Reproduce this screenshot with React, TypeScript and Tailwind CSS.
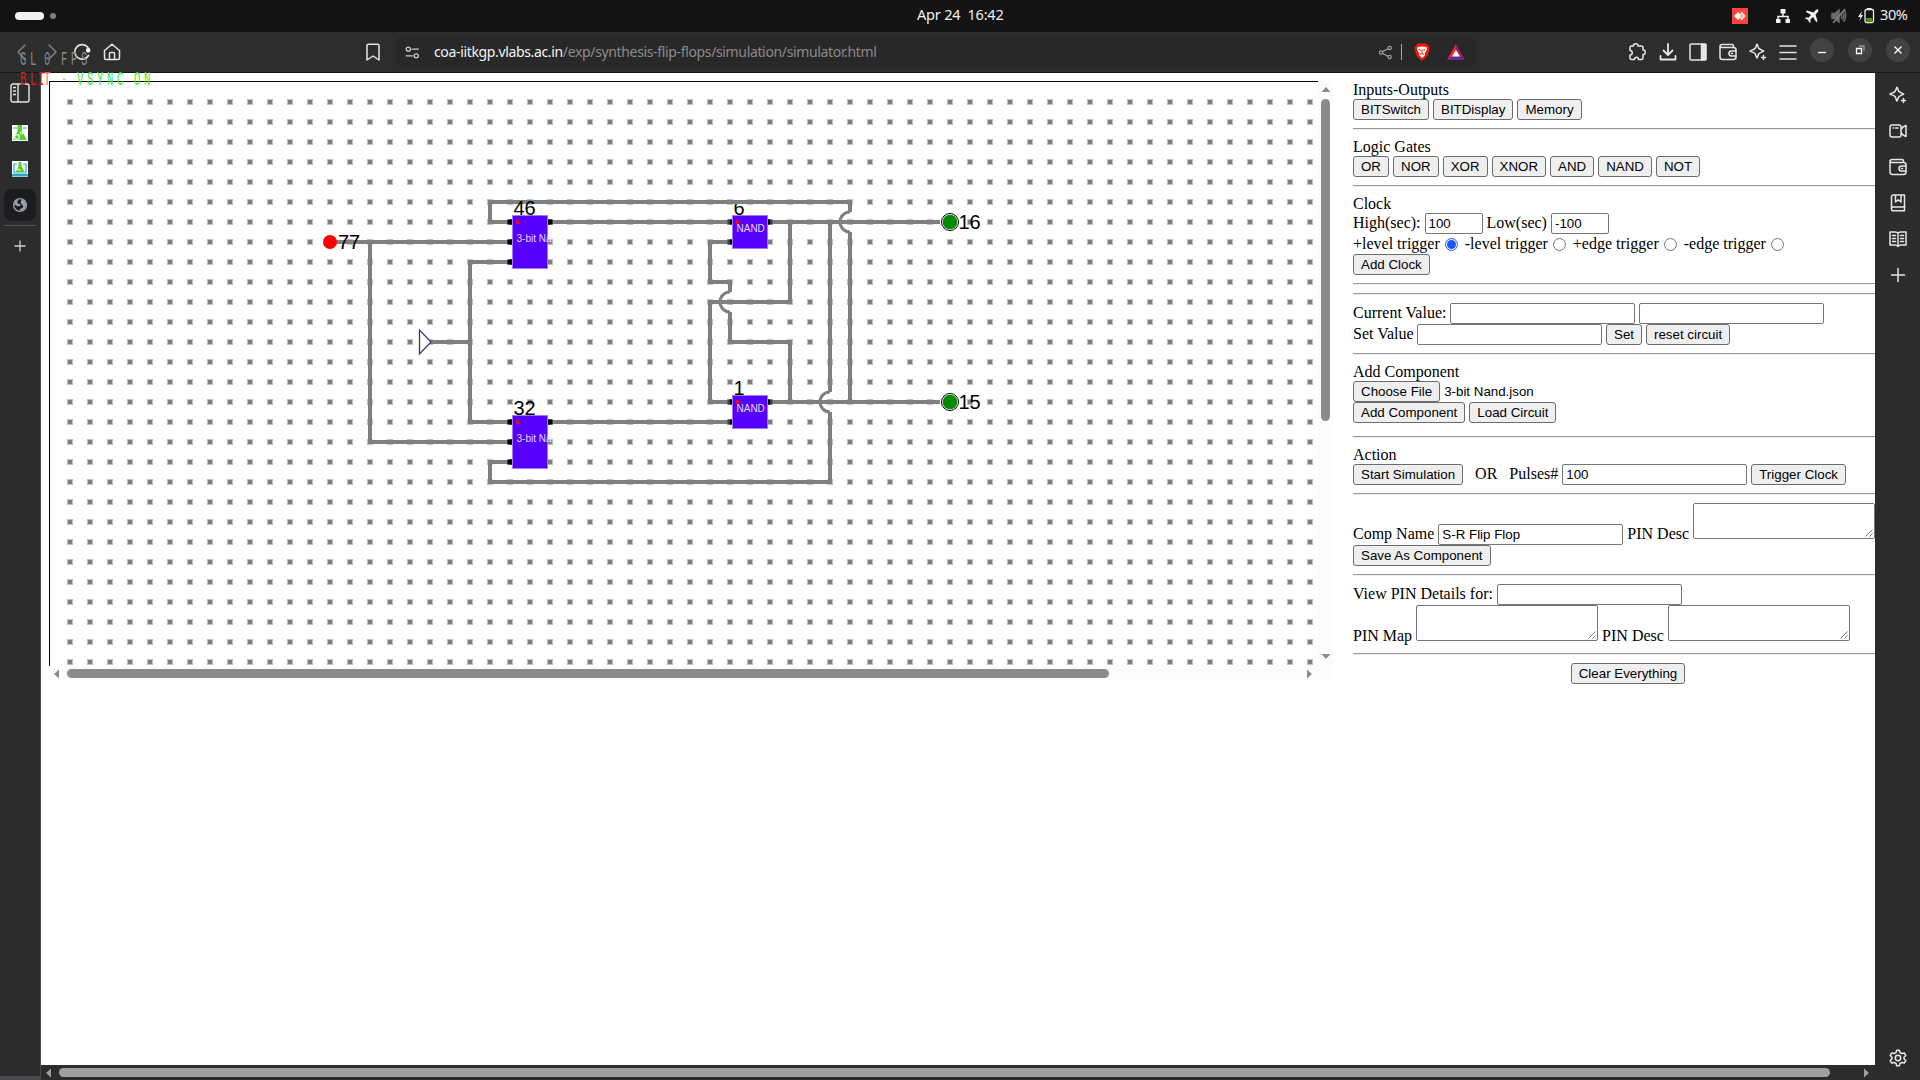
import React from "react";

const SERIF = "font-['Liberation_Serif',serif]";

function Btn({ children }: { children: React.ReactNode }) {
  return (
    <button className="h-[21px] shrink-0 rounded-[3px] border border-[#6b6b6b] bg-[#efefef] px-[7px] font-['Liberation_Sans',sans-serif] text-[13.333px] leading-[15px] text-black">
      {children}
    </button>
  );
}

function Field({ value = "", narrow = false }: { value?: string; narrow?: boolean }) {
  return (
    <input
      type="text"
      defaultValue={value}
      className={
        (narrow ? "w-[58px]" : "w-[185px]") +
        " h-[21px] shrink-0 rounded-[2px] border border-[#767676] bg-white px-[3px] py-[2px] font-['Liberation_Sans',sans-serif] text-[13.333px] leading-[15px] text-black"
      }
    />
  );
}

function Area() {
  return (
    <div className="flex h-[36px] w-[182px] shrink-0 items-end justify-end rounded-[2px] border border-[#767676] bg-white">
      <svg width="10" height="10" viewBox="0 0 10 10" stroke="#777" strokeWidth="1" fill="none">
        <path d="M1.5 8.5 8.5 1.5M5.5 8.5 8.5 5.5" />
      </svg>
    </div>
  );
}

function Radio({ on = false }: { on?: boolean }) {
  return on ? (
    <span className="mt-[3px] ml-[5px] mr-[7px] flex size-[13px] shrink-0 items-center justify-center rounded-full border border-[#1a56ff] bg-white">
      <span className="size-[9px] rounded-full bg-[#1a56ff]" />
    </span>
  ) : (
    <span className="mt-[3px] ml-[5px] mr-[7px] size-[13px] shrink-0 rounded-full border border-[#767676] bg-white" />
  );
}

function Hr() {
  return <div className="my-2 h-[2px] shrink-0 border-t border-b border-t-[#9a9a9a] border-b-[#eeeeee]" />;
}

function Row({ children }: { children: React.ReactNode }) {
  return <div className="flex h-[21px] shrink-0 items-baseline gap-1">{children}</div>;
}

function Controls() {
  return (
    <div className={"flex w-[522px] shrink-0 flex-col overflow-hidden whitespace-nowrap pt-2 text-[16px] leading-[18px] text-black " + SERIF}>
      <div>Inputs-Outputs</div>
      <Row>
        <Btn>BITSwitch</Btn>
        <Btn>BITDisplay</Btn>
        <Btn>Memory</Btn>
      </Row>
      <Hr />
      <div>Logic Gates</div>
      <Row>
        {["OR", "NOR", "XOR", "XNOR", "AND", "NAND", "NOT"].map((g) => (
          <Btn key={g}>{g}</Btn>
        ))}
      </Row>
      <Hr />
      <div>Clock</div>
      <Row>
        <span>High(sec):</span>
        <Field value="100" narrow />
        <span>Low(sec)</span>
        <Field value="-100" narrow />
      </Row>
      <div className="flex h-[20px] items-start pt-px">
        <span>+level trigger</span>
        <Radio on />
        <span>-level trigger</span>
        <Radio />
        <span>+edge trigger</span>
        <Radio />
        <span>-edge trigger</span>
        <Radio />
      </div>
      <Row>
        <Btn>Add Clock</Btn>
      </Row>
      <Hr />
      <div className="h-[2px] shrink-0 border-t border-b border-t-[#9a9a9a] border-b-[#eeeeee]" />
      <div className="h-2 shrink-0" />
      <Row>
        <span>Current Value:</span>
        <Field />
        <Field />
      </Row>
      <Row>
        <span className="-mr-[0.6px]">Set Value</span>
        <Field />
        <Btn>Set</Btn>
        <Btn>reset circuit</Btn>
      </Row>
      <Hr />
      <div>Add Component</div>
      <Row>
        <Btn>Choose File</Btn>
        <span className="font-['Liberation_Sans',sans-serif] text-[13.333px]">3-bit Nand.json</span>
      </Row>
      <Row>
        <Btn>Add Component</Btn>
        <Btn>Load Circuit</Btn>
      </Row>
      <div className="h-[5px] shrink-0" />
      <Hr />
      <div>Action</div>
      <Row>
        <Btn>Start Simulation</Btn>
        <span className="ml-2">OR</span>
        <span className="ml-2">Pulses#</span>
        <Field value="100" />
        <Btn>Trigger Clock</Btn>
      </Row>
      <Hr />
      <div className="flex h-[42px] shrink-0 items-start gap-1">
        <span className="mt-[22px]">Comp Name</span>
        <div className="mt-[21px] flex">
          <Field value="S-R Flip Flop" />
        </div>
        <span className="mt-[22px]">PIN Desc</span>
        <Area />
      </div>
      <Row>
        <Btn>Save As Component</Btn>
      </Row>
      <Hr />
      <Row>
        <span>View PIN Details for:</span>
        <Field />
      </Row>
      <div className="flex h-[40px] shrink-0 items-start gap-1">
        <span className="mt-[22px]">PIN Map</span>
        <Area />
        <span className="mt-[22px]">PIN Desc</span>
        <Area />
      </div>
      <Hr />
      <div className="flex justify-center pl-[28px]">
        <Btn>Clear Everything</Btn>
      </div>
    </div>
  );
}

const WIRES = [
  "M510 222H490V202H850V212",
  "M850 232V402",
  "M330 242H510",
  "M370 242V442H510",
  "M430 342H470",
  "M510 262H470V422H510",
  "M550 222H730",
  "M550 422H730",
  "M510 462H490V482H830V412",
  "M830 392V222",
  "M730 242H710V282H730V292",
  "M730 312V342H790V402",
  "M770 222H940",
  "M790 222V302H710V402H730",
  "M770 402H940",
];

const HOPS = [
  [850, 222],
  [730, 302],
  [830, 402],
];

const COLS = Array.from({ length: 63 }, (_, i) => 70 + i * 20);
const ROWS = Array.from({ length: 29 }, (_, i) => 102 + i * 20);

function dots(half: number) {
  const s = half * 2;
  return ROWS.flatMap((y) => COLS.map((x) => `M${x - half} ${y - half}h${s}v${s}h-${s}z`)).join("");
}

function Chip({ x, y, h, label, id }: { x: number; y: number; h: number; label: string; id: string }) {
  const nand = label === "NAND";
  return (
    <g>
      {(nand ? [0, 20] : [0, 20, 40]).map((dy) => (
        <g key={dy}>
          <rect x={x - 5} y={y + 4 + dy} width="5" height="5" fill={nand ? "#404040" : "#000"} />
          <rect x={x - 2.5} y={y + 4 + dy} width="2.5" height="5" fill="#000" />
        </g>
      ))}
      <rect x={x + 35} y={y + 4} width="5" height="5" fill={nand ? "#404040" : "#000"} />
      <rect x={x + 35} y={y + 4} width="2.5" height="5" fill="#000" />
      <rect x={x} y={y} width="35" height={h} fill="#5500ff" stroke="#a673ff" strokeWidth="1" />
      <circle cx={x + 5} cy={y + 6.5} r="2" fill="#f00" />
      <text x={x + 4} y={y + (nand ? 16.5 : 26.5)} fontSize="10" fill="#e8dcff">
        {label}
      </text>
      <text x={x + 1} y={y - 0.5} fontSize="20" fill="#000">
        {id}
      </text>
    </g>
  );
}

function Lamp({ y, id }: { y: number; id: string }) {
  return (
    <g>
      <circle cx="950" cy={y} r="8.5" fill="#fff" stroke="#000" strokeWidth="1" />
      <circle cx="950" cy={y} r="7.3" fill="#008b00" />
      <text x="958.500" y={y + 7} fontSize="20" fill="#000">
        {id}
      </text>
    </g>
  );
}

function Circuit() {
  return (
    <svg width="1268" height="584" viewBox="50 82 1268 584" className="block font-['Liberation_Sans',sans-serif]">
      <g shapeRendering="crispEdges">
        <path d={dots(3)} fill="#bfbfbf" />
        <path d={dots(2)} fill="#808080" />
      </g>
      <g fill="none" stroke="#808080" strokeWidth="4">
        {WIRES.map((d) => (
          <path key={d} d={d} />
        ))}
        {HOPS.map(([x, y]) => (
          <path key={x} d={`M${x} ${y - 10}A10 10 0 0 0 ${x} ${y + 10}`} strokeWidth="3" />
        ))}
      </g>
      <Chip x={512.5} y={215.5} h={53} label="3-bit Na" id="46" />
      <Chip x={512.5} y={415.5} h={53} label="3-bit Na" id="32" />
      <Chip x={732.5} y={215.5} h={33} label="NAND" id="6" />
      <Chip x={732.5} y={395.5} h={33} label="NAND" id="1" />
      <path d="M733 202H750" stroke="#808080" strokeWidth="4" />
      <path d="M419.5 330V354L431 342Z" fill="#fff" stroke="#3b3272" strokeWidth="1.3" />
      <circle cx="330" cy="242" r="7" fill="#f00" />
      <text x="338" y="249" fontSize="20">77</text>
      <Lamp y={222} id="16" />
      <Lamp y={402} id="15" />
    </svg>
  );
}

type IconProps = { size?: number; children: React.ReactNode; w?: number; c?: string };
function Ico({ size = 18, children, w = 1.5, c = "#e6e6e6" }: IconProps) {
  return (
    <svg width={size} height={size} viewBox="0 0 18 18" fill="none" stroke={c} strokeWidth={w} strokeLinejoin="round" strokeLinecap="round" className="shrink-0">
      {children}
    </svg>
  );
}

const sparkle = (
  <>
    <path d="M8 1.2C8.8 2.5 9 4 9.8 5.4 11.2 6.4 13 7 14.6 8 13 9 11.2 9.5 9.9 10.6 9 12 8.8 13.500 8 15 7 13.500 7 12 6.100 10.600 5 9.500 3 9 1 8 3 7 5 6.500 6.100 5.400 7 4 7.200 2.500 8 1.200Z" />
    <path d="M14.500 12.500V16.500M12.500 14.500H16.500" />
  </>
);
const wallet = (
  <>
    <path d="M14.500 4.500V3Q14.500 1.500 13 1.500H3Q1 1.500 1 3.500V14Q1 16.500 3.500 16.500H14.500Q17 16.500 17 14V7Q17 4.500 14.500 4.500H3Q1 4.500 1 3" />
    <path d="M17 8H12.500Q10 8 10 10.500T12.500 13H17M12.500 10.500H13.500" />
  </>
);

function TopBar() {
  return (
    <div className="flex h-8 shrink-0 items-center bg-[#131313] font-['Noto_Sans',sans-serif] text-[#f0f0f0]">
      <div className="flex w-[917px] items-center gap-[6px] pl-[15px]">
        <span className="h-2 w-[29px] rounded-full bg-[#f2f2f2]" />
        <span className="size-[6px] rounded-full bg-[#808080]" />
      </div>
      <div className="w-[815px] whitespace-pre pb-[2px] text-[14.5px] tracking-[-0.2px]">Apr 24  16:42</div>
      <div className="flex size-4 items-center justify-center bg-[#ff4438]">
        <svg width="14" height="10" viewBox="0 0 14 10">
          <path d="M5 1 9 5 5 9 1 5Z" fill="#fff" />
          <path d="M8 1.500 11.500 5 8 8.500" fill="none" stroke="#fff" strokeWidth="1.800" />
        </svg>
      </div>
      <svg width="16" height="16" viewBox="0 0 16 16" className="ml-[27px]" fill="#f0f0f0">
        <path d="M5.500 1H10.500V5.500H5.500ZM1 11H5.500V15H1ZM10.500 11H15V15H10.500Z" />
        <path d="M8 5V8.500M3 11V8.500H13V11" stroke="#f0f0f0" strokeWidth="1.500" fill="none" />
      </svg>
      <svg width="16" height="16" viewBox="0 0 16 16" className="ml-[13px]" fill="#f0f0f0">
        <path d="M14 1.500C13 1 12 2 11 3L9.500 4.500 3 2.500 1.800 3.700 7 7 4.500 9.700 2 9.300 1 10.300 4 12 5.700 15 6.700 14 6.300 11.500 9 9 12.300 14.200 13.500 13 11.500 6.500 13 5C14 4 15 2.500 14 1.500Z" />
      </svg>
      <svg width="16" height="16" viewBox="0 0 16 16" className="ml-[11px]" fill="none" stroke="#6b6b6b" strokeWidth="1.500">
        <path d="M1 5.500H4L8 2V14L4 10.500H1Z" fill="#6b6b6b" />
        <path d="M10 5.500Q11.500 8 10 10.500M11.500 3.500Q14 8 11.500 12.500M13.500 2Q16 8 13 14" />
        <path d="M14 1 2 15" stroke="#808080" />
      </svg>
      <svg width="17" height="16" viewBox="0 0 17 16" className="ml-[11px]">
        <path d="M4 3 0 9H2.500L1.500 13 5 7H3Z" fill="#f0f0f0" />
        <rect x="7" y="1.500" width="8.500" height="13" rx="1.500" fill="none" stroke="#f0f0f0" strokeWidth="1.300" />
        <rect x="9" y="0" width="4.500" height="1.700" fill="#f0f0f0" />
        <rect x="8.300" y="10" width="6" height="3.500" fill="#4e9a06" />
      </svg>
      <span className="ml-[5px] pb-[2px] text-[14.5px] tracking-[-0.4px]">30%</span>
    </div>
  );
}

function WinBtn({ children }: { children: React.ReactNode }) {
  return (
    <div className="flex size-6 shrink-0 items-center justify-center rounded-full bg-[#424242]">
      <svg width="12" height="12" viewBox="0 0 12 12" fill="none" stroke="#fff" strokeWidth="1.300">
        {children}
      </svg>
    </div>
  );
}

function Toolbar() {
  return (
    <div className="flex h-[41px] shrink-0 items-center border-b border-[#141414] bg-[#2d2d2d]">
      <div className="flex w-[366px] items-center pl-[13px]">
        <Ico c="#808080">
          <path d="M12 2 5 9 12 16" />
        </Ico>
        <div className="ml-[12px]">
          <Ico c="#808080">
            <path d="M6 2 13 9 6 16" />
          </Ico>
        </div>
        <div className="ml-[12px]">
          <Ico w={1.7}>
            <path d="M15.500 12.500A7.300 7.300 0 1 1 15 4.500" />
            <circle cx="15.200" cy="7.300" r="1.500" fill="#fff" stroke="#fff" />
          </Ico>
        </div>
        <div className="ml-[12px]">
          <Ico>
            <path d="M1.500 7.500 9 1.200 16.500 7.500V15Q16.500 16.500 15 16.500H3Q1.500 16.500 1.500 15ZM6.500 16.500V10.500Q6.500 9.500 7.500 9.500H10.500Q11.500 9.500 11.500 10.500V16.500" />
          </Ico>
        </div>
      </div>
      <div className="-ml-[2px] w-8">
        <Ico>
          <path d="M3 2.500Q3 1.200 4.300 1.200H13.700Q15 1.200 15 2.500V17L9 13 3 17Z" />
        </Ico>
      </div>
      <div className="flex h-8 w-[1080px] shrink-0 items-center rounded-lg bg-[#282828] pl-[9px]">
        <Ico size={15} c="#d0d0d0">
          <circle cx="4" cy="5" r="2.500" />
          <circle cx="13.500" cy="13" r="2.500" />
          <path d="M8.500 5H16M1.500 13H9" />
        </Ico>
        <div className="ml-[14px] w-[944px] whitespace-nowrap pb-[2px] font-['Noto_Sans',sans-serif] text-[14px] tracking-[-0.35px] text-[#8b8b8b]">
          <span className="text-[#f5f5f5]">coa-iitkgp.vlabs.ac.in</span>/exp/synthesis-flip-flops/simulation/simulator.html
        </div>
        <Ico size={15} c="#9a9a9a">
          <circle cx="3.500" cy="9" r="2" />
          <circle cx="14" cy="3.500" r="2" />
          <circle cx="14" cy="14.500" r="2" />
          <path d="M5.500 8 12 4.500M5.500 10 12 13.500" />
        </Ico>
        <span className="ml-2 h-4 w-px bg-[#aaa]" />
        <svg width="16" height="18" viewBox="0 0 16 18" className="ml-3">
          <path d="M4 0.500H12L15.500 4 14.500 10Q13 14.500 8 17.800 3 14.500 1.500 10L0.500 4Z" fill="#ff1500" />
          <path d="M3.500 4 8 3.500 12.500 4 13 6.500 11 10 11 12 8 15 5 12V10L3 6.500Z" fill="#fff" />
          <path d="M4.500 6.500 7 7.300M11.500 6.500 9 7.300M8 7V10.500M6 11.500 8 10.500 10 11.500" stroke="#ff2000" fill="none" />
        </svg>
        <svg width="18" height="16" viewBox="0 0 18 16" className="ml-[17px]">
          <path d="M9 0 0 16 9 10Z" fill="#ff1f3a" />
          <path d="M9 0 18 16 9 10Z" fill="#9e1f63" />
          <path d="M0 16H18L9 10Z" fill="#662d91" />
          <path d="M9 6 13 12.500H5Z" fill="#fff" />
        </svg>
      </div>
      <div className="ml-[152px] flex items-center gap-3">
        <Ico>
          <path d="M2 4.500Q2 3 3.500 3H5.500C4.500 0 11 0 10 3H13Q15 3 15 4.500V7C18 6.500 18 12 15 11.500V15Q15 16.500 13.500 16.500H10.500C10.500 13.500 6.500 13.500 6.500 16.500H3.500Q2 16.500 2 15V12C5 12 5 7.500 2 7.500Z" />
        </Ico>
        <div className="ml-px flex items-center gap-3">
          <Ico w={1.8}>
            <path d="M9 1V11.500M4.500 7.500 9 12 13.500 7.500M1.500 13V16.500H16.500V13" />
          </Ico>
          <Ico>
            <rect x="1" y="1" width="16" height="16" rx="1" />
            <path d="M12.500 1.500H16.500V16.500H12.500Z" fill="#e6e6e6" />
          </Ico>
          <Ico>{wallet}</Ico>
          <Ico>{sparkle}</Ico>
          <Ico>
            <path d="M1 3H17M1 9.500H17M1 16H17" />
          </Ico>
        </div>
      </div>
      <div className="-mt-1 ml-[13px] flex items-center gap-[14px]">
        <WinBtn>
          <path d="M2 8.500H10" />
        </WinBtn>
        <WinBtn>
          <path d="M2.500 4.500H7.500V9.500H2.500Z" />
          <path d="M5 2H10V7" stroke="#999" />
        </WinBtn>
        <WinBtn>
          <path d="M2.500 2.500 9.500 9.500M9.500 2.500 2.500 9.500" />
        </WinBtn>
      </div>
    </div>
  );
}

function LeftRail() {
  return (
    <div className="flex w-[41px] shrink-0 flex-col items-center border-r border-[#4a4a4a] bg-[#2c2c2c] pt-[10px]">
      <svg width="20" height="20" viewBox="0 0 20 20" fill="none" stroke="#e6e6e6" strokeWidth="1.400" className="shrink-0">
        <rect x="1" y="1" width="18" height="18" rx="2" />
        <path d="M8 1V19M3 4.500H6M3 8H6M3 11.500H6" />
      </svg>
      <svg width="16" height="16" viewBox="0 0 16 16" className="mt-[22px] shrink-0">
        <rect width="16" height="16" fill="#fff" />
        <path d="M1 3H5M11 3H15" stroke="#2fa4c8" />
        <path d="M5.500 0H10V6L15 15H1L5.500 6Z" fill="#58d030" />
        <circle cx="5" cy="12" r="2.300" fill="none" stroke="#e9ffe0" strokeWidth="1.200" />
        <circle cx="9.500" cy="8" r="1.300" fill="none" stroke="#e9ffe0" />
      </svg>
      <svg width="16" height="16" viewBox="0 0 16 16" className="mt-[20px] shrink-0">
        <rect width="16" height="16" fill="#fff" />
        <path d="M5 3H2V12H14V3H11" fill="none" stroke="#2fa4c8" strokeWidth="1.200" />
        <path d="M6.500 1H9.500V5L12.500 11H3.500L6.500 5Z" fill="#58d030" />
        <path d="M5 9 7 8 8 10" stroke="#fff" fill="none" />
        <rect y="13" width="16" height="2.500" fill="#2fa4c8" />
      </svg>
      <div className="mt-3 flex size-8 shrink-0 items-center justify-center rounded-lg bg-[#1c1c20]">
        <svg width="16" height="16" viewBox="0 0 16 16">
          <circle cx="8" cy="8" r="6.400" fill="none" stroke="#9aa0a8" strokeWidth="1.400" />
          <path d="M2 6.500C2.500 4 4 2.500 6.500 2 7 3.500 5 4 5.200 5.500 5.500 7 7.500 6.500 8.500 7.500 9.500 9 7 9.500 5 9 4 8.500 3 7.500 2 8Z" fill="#9aa0a8" />
          <path d="M9.500 2C12 2.500 13.500 4.500 14 7.500 14 9.500 13 11.500 11.500 13 9.500 14 8 14 7.500 13 8 11.500 11 11.500 11.200 9.500 11 7.500 8.800 7 8.500 5.500 8.500 4.500 10 3.500 9.500 2Z" fill="#9aa0a8" />
        </svg>
      </div>
      <div className="mt-1 h-px w-8 shrink-0 bg-[#555]" />
      <svg width="12" height="12" viewBox="0 0 12 12" className="mt-[14px] shrink-0" stroke="#d0d0d0" strokeWidth="1.300">
        <path d="M6 0.500V11.500M0.500 6H11.500" />
      </svg>
      <div className="mt-auto h-1 w-full bg-[#4a484c]" />
    </div>
  );
}

function RightRail() {
  return (
    <div className="flex w-[45px] shrink-0 flex-col items-center bg-[#2c2c2c] pt-[13px] pb-[13px]">
      <div className="flex flex-col gap-[18px] pl-[1px]">
        <Ico>{sparkle}</Ico>
        <Ico>
          <path d="M3 3H10Q12 3 12 5V13Q12 15 10 15H3Q1 15 1 13V5Q1 3 3 3ZM12 7.500 14 5 17 3.500V14.500L14 13 12 10.500M4 6H4.500M6.500 6H9" />
        </Ico>
        <Ico>{wallet}</Ico>
        <Ico>
          <path d="M16 13H4.500Q2.500 13 2.500 15T4.500 16.800H15.500V1H4.500Q2.500 1 2.500 3V15M6.500 1V8L9.300 5.800 12 8V1" />
        </Ico>
        <Ico>
          <path d="M9 3Q7.500 2 6 2H1V15H6Q7.500 15 9 16.500 10.500 15 12 15H17V2H12Q10.500 2 9 3ZM9 3V16.500M3.500 5.500H6.500M3.500 8.500H6.500M3.500 11.500H6.500M11.500 5.500H14.500M11.500 8.500H14.500M11.500 11.500H14.500" />
        </Ico>
        <Ico>
          <path d="M9 2.500V15.500M2.500 9H15.500" />
        </Ico>
      </div>
      <div className="mt-auto">
        <Ico>
          <path d="M7 3.500 7.700 1.200H10.300L11 3.500 13 4.600 15.300 4 16.800 6.500 15 8.200V9.800L16.800 11.500 15.300 14 13 13.400 11 14.500 10.300 16.800H7.700L7 14.500 5 13.400 2.700 14 1.200 11.500 3 9.800V8.200L1.200 6.500 2.700 4 5 4.600Z" />
          <circle cx="9" cy="9" r="2.700" />
        </Ico>
      </div>
    </div>
  );
}

function Arrow({ d, color = "#8b8b8b" }: { d: string; color?: string }) {
  return (
    <svg width="10" height="10" viewBox="0 0 10 10" className="shrink-0">
      <path d={d} fill={color} />
    </svg>
  );
}

const LEFT = "M7 0.500V9.500L2 5Z";
const RIGHT = "M2 0.500V9.500L7 5Z";
const UP = "M0.500 8H9.500L5 3Z";
const DOWN = "M0.500 2H9.500L5 7Z";

function Simulator() {
  return (
    <div className="ml-2 mt-2 h-[600px] w-[1284px] shrink-0 bg-[#fcfcfc]">
      <div className="flex h-[585px]">
        <div className="w-[1269px] overflow-hidden border-l border-t border-black bg-white">
          <Circuit />
        </div>
        <div className="flex w-[15px] flex-col items-center pt-[3px] pb-1">
          <Arrow d={UP} />
          <div className="mt-[5px] h-[322px] w-[9px] rounded-full bg-[#8b8b8b]" />
          <div className="mt-auto">
            <Arrow d={DOWN} />
          </div>
        </div>
      </div>
      <div className="flex h-[15px] w-[1269px] items-center px-[3px]">
        <Arrow d={LEFT} />
        <div className="ml-[5px] h-[9px] w-[1042px] rounded-full bg-[#8b8b8b]" />
        <div className="ml-auto">
          <Arrow d={RIGHT} />
        </div>
      </div>
    </div>
  );
}

function Overlay() {
  return (
    <div className="pointer-events-none absolute left-5 top-[50px] whitespace-pre font-['Liberation_Mono',monospace] text-[21px] leading-5">
      <div className="flex origin-left scale-x-50 tracking-[7.4px] text-[#8a8a8a]">
        <span>GL</span>
        <span className="ml-2">0</span>
        <span className="ml-[14px]">FPS</span>
      </div>
      <div className="flex origin-left scale-x-50 tracking-[7.4px]">
        <span className="text-[#e01818]">BL</span>
        <span className="-ml-[4px] text-[#e01818]">I</span>
        <span className="-ml-[8px] text-[#ff5a5a]">T</span>
        <span className="ml-[14px] text-[#c8c8c8]">-</span>
        <span className="ml-[12px] text-[#3ee83e]">VSYNC</span>
        <span className="ml-[14px] text-[#3ee83e]">ON</span>
      </div>
    </div>
  );
}

export default function App() {
  return (
    <div className="relative flex h-[1080px] w-[1920px] flex-col overflow-hidden bg-white">
      <TopBar />
      <Toolbar />
      <div className="flex min-h-0 flex-1">
        <LeftRail />
        <div className="flex w-[1834px] shrink-0 flex-col bg-white">
          <div className="flex min-h-0 flex-1">
            <Simulator />
            <div className="w-5 shrink-0" />
            <Controls />
          </div>
          <div className="flex h-[15px] shrink-0 items-center bg-[#2c2c2c] px-[3px]">
            <Arrow d={LEFT} color="#a0a0a0" />
            <div className="ml-[5px] h-[9px] w-[1771px] rounded-full bg-[#a0a0a0]" />
            <div className="ml-auto">
              <Arrow d={RIGHT} color="#a0a0a0" />
            </div>
          </div>
        </div>
        <RightRail />
      </div>
      <Overlay />
    </div>
  );
}
